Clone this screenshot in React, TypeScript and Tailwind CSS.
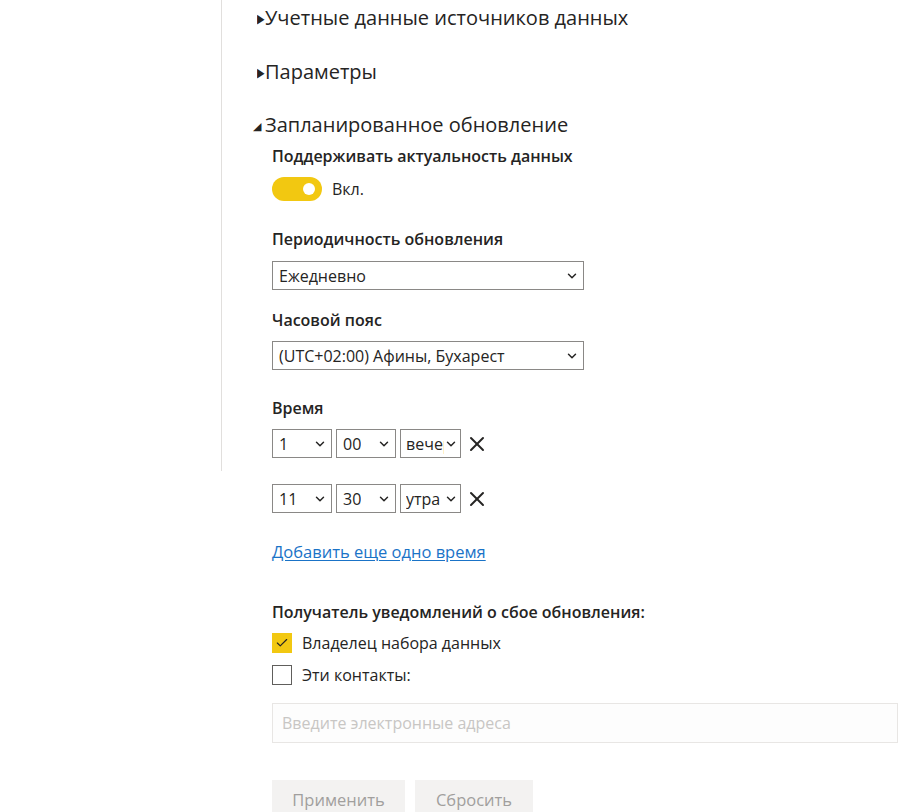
import { ChevronDown, X, Check } from "lucide-react";

type SelectBoxProps = { value: string; className: string };

function SelectBox({ value, className }: SelectBoxProps) {
  return (
    <div
      className={`flex items-center justify-between overflow-hidden border border-[#8a8886] bg-white pl-[6px] pr-[4px] text-[16px] text-[#252423] ${className}`}
    >
      <span className="overflow-hidden whitespace-nowrap">{value}</span>
      <ChevronDown size={14} strokeWidth={2.5} className="shrink-0 text-[#252423]" />
    </div>
  );
}

function TimeRow({ h, m, ampm }: { h: string; m: string; ampm: string }) {
  return (
    <div className="flex items-center gap-[4px]">
      <SelectBox value={h} className="h-[29px] w-[60px]" />
      <SelectBox value={m} className="h-[29px] w-[60px]" />
      <SelectBox value={ampm} className="h-[29px] w-[61px] !pl-[5px] !pr-[2px]" />
      <X size={24} strokeWidth={2} className="text-[#252423]" />
    </div>
  );
}

function Section({ open, title }: { open?: boolean; title: string }) {
  return (
    <div className="flex h-[24px] items-center text-[20px] text-[#252423]">
      {open ? (
        <span className="mr-[4px] text-[11px] leading-none">◢</span>
      ) : (
        <span className="-ml-[1px] mr-[-1px] scale-x-75 text-[13px] leading-none">▶</span>
      )}
      {title}
    </div>
  );
}

const label = "text-[16px] font-semibold leading-[20px] text-[#252423]";

export default function App() {
  return (
    <div
      className="relative h-[812px] w-[899px] overflow-hidden bg-white"
      style={{ fontFamily: '"Open Sans", "Noto Sans", sans-serif' }}
    >
      <div className="absolute left-[221px] top-0 h-[471px] w-px bg-[#e1dfdd]" />

      <div className="flex flex-col pl-[257px] pt-[6px]">
        <Section title="Учетные данные источников данных" />
        <div className="mt-[30px]">
          <Section title="Параметры" />
        </div>
        <div className="mt-[29px] -ml-[4px]">
          <Section open title="Запланированное обновление" />
        </div>

        <div className="ml-[15px] flex flex-col">
          <div className={`mt-[9px] ${label}`}>Поддерживать актуальность данных</div>
          <div className="mt-[11px] flex items-center">
            <div className="relative h-[24px] w-[50px] rounded-full bg-[#f2c811]">
              <div className="absolute right-[7px] top-[6px] h-[12px] w-[12px] rounded-full bg-white" />
            </div>
            <span className="ml-[10px] text-[16px] text-[#252423]">Вкл.</span>
          </div>

          <div className={`mt-[28px] ${label}`}>Периодичность обновления</div>
          <SelectBox value="Ежедневно" className="mt-[12px] h-[29px] w-[312px]" />

          <div className={`mt-[20px] ${label}`}>Часовой пояс</div>
          <SelectBox value="(UTC+02:00) Афины, Бухарест" className="mt-[11px] h-[29px] w-[312px]" />

          <div className={`mt-[28px] ${label}`}>Время</div>
          <div className="mt-[11px]">
            <TimeRow h="1" m="00" ampm="вечера" />
          </div>
          <div className="mt-[26px]">
            <TimeRow h="11" m="30" ampm="утра" />
          </div>

          <a className="mt-[28px] w-fit text-[16.5px] leading-[22px] text-[#1a73c7] underline underline-offset-2">
            Добавить еще одно время
          </a>

          <div className={`mt-[39px] ${label}`}>Получатель уведомлений о сбое обновления:</div>
          <div className="mt-[9px] flex items-center">
            <div className="flex h-[20px] w-[20px] items-center justify-center bg-[#f2c811]">
              <Check size={14} strokeWidth={2} className="text-[#252423]" />
            </div>
            <span className="ml-[10px] text-[16px] text-[#252423]">Владелец набора данных</span>
          </div>
          <div className="mt-[8px] flex items-center">
            <div className="h-[20px] w-[20px] border border-[#605e5c] bg-white" />
            <span className="ml-[10px] text-[16px] text-[#252423]">Эти контакты:</span>
          </div>

          <div className="mt-[16px] flex h-[40px] w-[626px] items-center border border-[#e8e6e4] bg-[#fdfdfd] px-[9px] text-[16px] text-[#c8c6c4]">
            Введите электронные адреса
          </div>

          <div className="mt-[37px] flex gap-[10px]">
            <div className="flex h-[40px] w-[133px] items-center justify-center bg-[#f3f2f1] text-[16.5px] text-[#a19f9d]">
              Применить
            </div>
            <div className="flex h-[40px] w-[118px] items-center justify-center bg-[#f3f2f1] text-[16.5px] text-[#a19f9d]">
              Сбросить
            </div>
          </div>
        </div>
      </div>
    </div>
  );
}
